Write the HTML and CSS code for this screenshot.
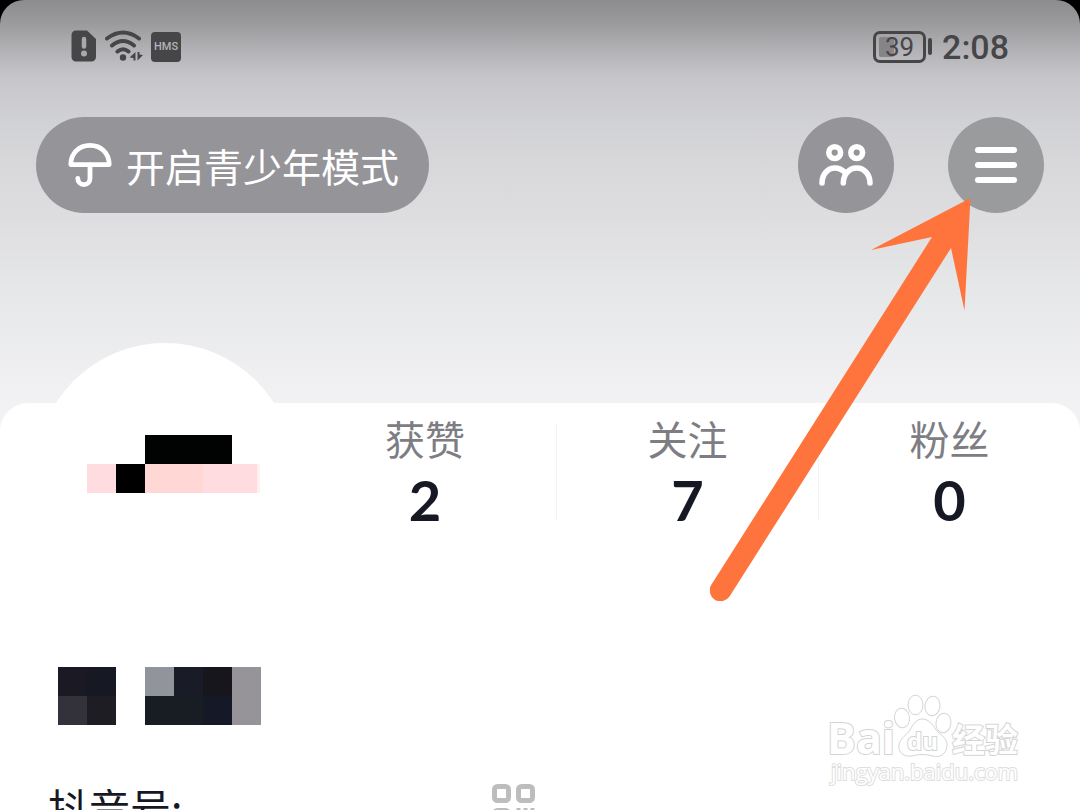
FILE: index.html
```
<!DOCTYPE html>
<html lang="zh-CN">
<head>
    <meta charset="UTF-8">
    <meta name="viewport" content="width=device-width, initial-scale=1.0">
    <title>我</title>
    <link rel="stylesheet" href="styles.css">
</head>
<body>
    <div class="screen">
        <!-- Status bar -->
        <div class="status-bar">
            <div class="status-left">
                <svg width="26" height="32" viewBox="0 0 26 32">
                    <path d="M5 0.500H16L25 9V27a4.500 4.500 0 0 1-4.500 4.500H5A4.500 4.500 0 0 1 0.500 27V5A4.500 4.500 0 0 1 5 0.500Z" fill="#464648"/>
                    <path d="M13 9V16.500" stroke="#a9a8ac" stroke-width="4.500" stroke-linecap="round"/>
                    <circle cx="13" cy="23.500" r="3" fill="#a9a8ac"/>
                </svg>
                <svg width="38" height="32" viewBox="0 0 38 32" fill="none" stroke="#464648" stroke-width="4" stroke-linecap="round">
                    <path d="M2 8.500Q18 -3.500 34 8.500M7 15.500Q18 6.500 29 15.500M12.500 21.500Q18 17 23.500 21.500"/>
                    <circle cx="18" cy="27.500" r="3.200" fill="#464648" stroke="none"/>
                    <path d="M30.500 22V30.500H28.500V28L24.500 27.500ZM32.500 30.500V22H34.500V24.500L38 25Z" fill="#464648" stroke="none"/>
                </svg>
                <span class="hms">HMS</span>
            </div>
            <div class="status-right">
                <div class="battery"><span class="battery-level"></span><span class="battery-text">39</span></div>
                <span class="battery-cap"></span>
                <time class="clock">2:08</time>
            </div>
        </div>

        <!-- Top buttons -->
        <nav class="top-nav">
            <button class="teen-mode" type="button">
                <svg width="44" height="44" viewBox="0 0 44 44" fill="none" stroke="#fff" stroke-width="4.800" stroke-linecap="round" stroke-linejoin="round">
                    <path d="M2.800 21.600C2.800 10.500 10.500 2.400 22 2.400S41.200 10.500 41.200 21.600Z"/>
                    <path d="M22 22V35.500A6 6 0 0 1 9.800 35.500"/>
                </svg>
                <span>开启青少年模式</span>
            </button>
            <div class="round-buttons">
                <button class="round friends" type="button" aria-label="朋友">
                    <svg width="54" height="44" viewBox="0 0 54 44" fill="none" stroke="#fff" stroke-width="5.600" stroke-linecap="round" stroke-linejoin="round">
                        <circle cx="15.700" cy="9.600" r="5.900"/>
                        <circle cx="37.700" cy="9.600" r="5.900"/>
                        <path d="M3 40C3 31.500 8.500 25 16 25C20 25 23 26.500 26 29.500"/>
                        <path d="M24.300 40C24.300 31.500 30 25 37.700 25S51 31.500 51 40"/>
                    </svg>
                </button>
                <button class="round menu" type="button" aria-label="菜单">
                    <svg width="42" height="36" viewBox="0 0 42 36" stroke="#fff" stroke-width="6" stroke-linecap="round">
                        <path d="M3 3H39M3 18H39M3 33H39"/>
                    </svg>
                </button>
            </div>
        </nav>

        <!-- Profile card -->
        <main class="card">
            <div class="profile">
                <div class="avatar">
                    <svg width="174" height="58" viewBox="0 0 174 58" shape-rendering="crispEdges">
                        <rect x="58" width="87" height="29" fill="#010303"/>
                        <rect y="29" width="29" height="29" fill="#ffdce0"/>
                        <rect x="29" y="29" width="29" height="29" fill="#000"/>
                        <rect x="58" y="29" width="58" height="29" fill="#ffd8d5"/>
                        <rect x="116" y="29" width="54" height="29" fill="#ffdce0"/>
                        <rect x="170" y="29" width="3" height="29" fill="#fff0f2"/>
                    </svg>
                </div>
                <dl class="stats">
                    <div class="stat"><dt>获赞</dt><dd>2</dd></div>
                    <div class="stat"><dt>关注</dt><dd>7</dd></div>
                    <div class="stat"><dt>粉丝</dt><dd>0</dd></div>
                </dl>
            </div>
            <svg class="nickname" width="203" height="58" viewBox="0 0 203 58" shape-rendering="crispEdges">
                <rect width="29" height="29" fill="#1a1924"/>
                <rect x="29" width="29" height="29" fill="#161823"/>
                <rect y="29" width="29" height="29" fill="#33323a"/>
                <rect x="29" y="29" width="29" height="29" fill="#1e1d24"/>
                <rect x="87" width="29" height="29" fill="#91959b"/>
                <rect x="116" width="29" height="29" fill="#191b27"/>
                <rect x="145" width="29" height="29" fill="#17161c"/>
                <rect x="87" y="29" width="58" height="29" fill="#181c23"/>
                <rect x="145" y="29" width="29" height="29" fill="#151827"/>
                <rect x="174" width="29" height="58" fill="#969499"/>
            </svg>
            <div class="account">
                <span class="account-id">抖音号:</span>
                <svg width="44" height="44" viewBox="0 0 44 44" fill="none" stroke="#bdbdbd" stroke-width="5">
                    <rect x="2.500" y="2.500" width="14" height="14" rx="3"/>
                    <rect x="26.500" y="2.500" width="14" height="14" rx="3"/>
                    <rect x="2.500" y="26.500" width="14" height="14" rx="3"/>
                    <path d="M26.500 24V42M33.500 24V32M40.500 24V42" stroke-width="4"/>
                </svg>
            </div>
        </main>

        <!-- Arrow pointing at the menu button -->
        <svg class="arrow" width="262" height="403" viewBox="0 0 262 403">
            <path d="M260.500 0L161 52L222 39L1.500 386.500A10.500 10.500 0 0 0 19.500 398.500L241 50L254.500 112.500Z" fill="#ff743c"/>
        </svg>

        <!-- Watermark -->
        <svg class="watermark" width="200" height="96" viewBox="0 0 200 96">
            <g class="wm-shape">
                <path d="M96.500 24C103 24 107 30 110 35C115 40 122 44 121 51C120 60 113 63 107 61C99 59 93 59 86 61C78 62 72 58 73 50C74 43 80 41 84 35C87 29 90 24 96.500 24Z"/>
                <ellipse cx="76" cy="23" rx="7.500" ry="9.800" transform="rotate(-8 76 23)"/>
                <ellipse cx="89.500" cy="10" rx="7.500" ry="9.800"/>
                <ellipse cx="106.500" cy="11" rx="7.500" ry="9.800" transform="rotate(8 106.500 11)"/>
                <ellipse cx="117.500" cy="28" rx="7.500" ry="9.800" transform="rotate(8 117.500 28)"/>
            </g>
            <g class="wm-text">
                <text class="wm-bai" x="1" y="59">Bai</text>
                <text class="wm-du" x="81" y="55">du</text>
                <text class="wm-cjk" x="126" y="57">经验</text>
                <text class="wm-url" x="5" y="85">jingyan.baidu.com</text>
            </g>
        </svg>
    </div>
</body>
</html>
```
FILE: styles.css
```
* {
    box-sizing: border-box;
}

body {
    margin: 0;
    height: 100vh;
    overflow: hidden;
    background: #000;
    font-family: "Noto Sans CJK SC", sans-serif;
}

.screen {
    position: relative;
    min-height: 100vh;
    border-radius: 24px 24px 0 0;
    overflow: hidden;
    background: linear-gradient(#8c8c8e 0, #9b9b9d 24px, #b2b1b5 50px, #c6c5ca 76px, #cccbd0 100px, #d1d2d6 124px, #d8d7da 164px, #dedee0 220px, #e6e7e9 290px, #f2f2f4 403px);
}

/* Status bar */
.status-bar {
    display: flex;
    justify-content: space-between;
    align-items: center;
    height: 93px;
    padding: 0 71px;
    color: #464648;
}

.status-left,
.status-right {
    display: flex;
    align-items: center;
}

.status-left {
    gap: 8px;
    height: 34px;
}

.status-left svg {
    display: block;
    margin-bottom: 2px;
}

.hms {
    width: 30px;
    height: 30px;
    border-radius: 4px;
    background: #464648;
    color: #b4b3b8;
    font: 500 11px/30px "Roboto", sans-serif;
    text-align: center;
}

.battery {
    position: relative;
    width: 53px;
    height: 32px;
    border: 3px solid #464648;
    border-radius: 7px;
    text-align: center;
}

.battery-level {
    position: absolute;
    left: 3px;
    top: 3px;
    width: 15px;
    height: 20px;
    border-radius: 2px;
    background: #858588;
}

.battery-text {
    position: relative;
    display: block;
    font: 26px/26px "Roboto", sans-serif;
}

.battery-cap {
    width: 4px;
    height: 17px;
    margin: 0 10px 0 2px;
    border-radius: 2px;
    background: #464648;
}

.clock {
    font: 500 34px/40px "Roboto", sans-serif;
}

/* Top buttons */
.top-nav {
    display: flex;
    justify-content: space-between;
    padding: 24px 36px 0;
    height: 310px;
}

button {
    display: flex;
    align-items: center;
    justify-content: center;
    height: 96px;
    padding: 0;
    border: 0;
    border-radius: 48px;
    background: #959499;
    color: #fff;
}

.teen-mode {
    gap: 14px;
    padding: 0 30px 0 32px;
    font: 39px/56px "Noto Sans CJK SC", sans-serif;
}

.round-buttons {
    display: flex;
    gap: 54px;
}

.round {
    width: 96px;
}

.menu {
    background: #9a9b9c;
}

/* Profile card */
.card {
    padding: 0 0 0 36px;
    border-radius: 28px 28px 0 0;
    background: #fff;
}

.profile {
    display: flex;
    height: 264px;
}

.avatar {
    width: 258px;
    height: 258px;
    margin-top: -60px;
    padding: 92px 0 0 51px;
    border-radius: 50%;
    background: #fff;
}

.stats {
    display: grid;
    grid-template-columns: repeat(3, 1fr);
    flex: 1;
    height: 96px;
    margin: 21px 0 0;
}

.stat {
    display: flex;
    flex-direction: column;
    align-items: center;
    height: 96px;
}

.stat + .stat {
    border-left: 1px solid #f3f3f3;
}

.stat dt {
    color: #7d7d83;
    font-size: 40px;
    line-height: 28px;
}

.stat dd {
    margin: 16px 0 0;
    color: #161823;
    font: bold 56px/64px "Lato", sans-serif;
}

.nickname {
    display: block;
    margin-left: 22px;
}

.account {
    display: flex;
    align-items: center;
    height: 58px;
    margin: 52px 0 0 12px;
    color: #161823;
    font-size: 41px;
}

.account-id {
    width: 444px;
    line-height: 58px;
}

/* Overlays */
.arrow {
    position: absolute;
    right: 108px;
    top: 198px;
}

.watermark {
    position: absolute;
    right: 54px;
    top: 695px;
    overflow: visible;
}

.wm-shape,
.wm-text {
    fill: #fff;
    stroke: #d4d4d4;
    stroke-width: 1px;
}

.wm-text {
    font-family: "Open Sans", "Noto Sans CJK SC", sans-serif;
    font-weight: bold;
    paint-order: stroke;
    stroke-width: 2px;
}

.wm-bai {
    font-size: 43px;
}

.wm-du {
    font-size: 24px;
}

.wm-cjk {
    font-size: 33px;
}

.wm-url {
    font-size: 22px;
    font-weight: normal;
    stroke: #dedede;
}
```
